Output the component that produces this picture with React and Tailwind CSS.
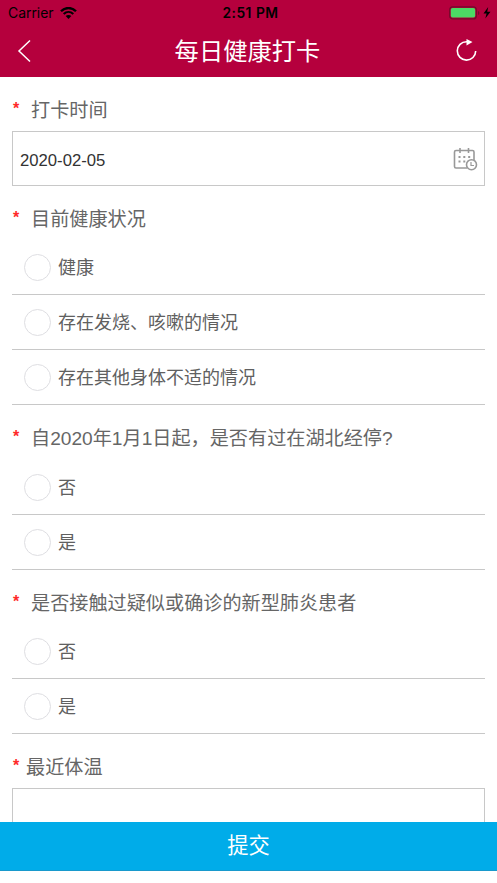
import { useState } from "react";

const questions = [
  {
    title: "目前健康状况",
    options: ["健康", "存在发烧、咳嗽的情况", "存在其他身体不适的情况"],
  },
  {
    title: "自2020年1月1日起，是否有过在湖北经停?",
    options: ["否", "是"],
    extra: "pb-px",
  },
  {
    title: "是否接触过疑似或确诊的新型肺炎患者",
    options: ["否", "是"],
  },
];

const StatusBar = () => (
  <div className="grid h-[26px] grid-cols-3 items-center pl-2 pr-1.5 text-[14px] text-black font-[Inter,sans-serif]">
    <div className="flex items-center gap-[6px] pb-px">
      <span className="tracking-[-0.05px]">Carrier</span>
      <svg width="17" height="12" viewBox="0 0 17 12" fill="none" stroke="black">
        <path d="M1 4.3C5.2-.1 11.8-.1 16 4.3" strokeWidth="2.3" />
        <path d="M3.7 7.1C6.5 4.3 10.5 4.3 13.3 7.1" strokeWidth="2.1" />
        <path d="M8.5 12L5.7 9.1C7.3 7.5 9.7 7.5 11.3 9.1Z" fill="black" stroke="none" />
      </svg>
    </div>
    <div className="whitespace-nowrap pl-[2px] text-center font-semibold tracking-[0.5px] text-[13.8px]">2:51 PM</div>
    <div className="flex items-center justify-end pb-px">
      <svg width="42" height="14" viewBox="0 0 42 14">
        <rect x="0.7" y="0.9" width="26.6" height="12" rx="3" fill="none" stroke="#730a2b" strokeWidth="1.2" />
        <rect x="1.8" y="2" width="24.4" height="9.6" rx="1.8" fill="#4cd964" />
        <path d="M29 5v4q1.4-.6 1.4-2T29 5Z" fill="#730a2b" />
        <path d="M39.2 1L34.5 7.6H37.6L36.3 12.6L41.5 5.8H38.2Z" fill="black" />
      </svg>
    </div>
  </div>
);

const Label = ({ children, gap = "gap-[11px]" }) => (
  <div className={`flex h-[54px] items-center pl-px pt-3.5 text-[19.15px] leading-[30px] text-[#666] ${gap}`}>
    <span className="w-[7px] pb-1 text-[16px] font-bold font-[Liberation_Sans,sans-serif] text-[#ff2a2a]">*</span>
    <span className="whitespace-nowrap">{children}</span>
  </div>
);

const Question = ({ title, options, extra = "" }) => {
  const [selected, setSelected] = useState(null);

  return (
    <div>
      <div className={extra}>
        <Label>{title}</Label>
      </div>
      {options.map((option, index) => (
        <button
          key={index}
          className="flex h-[55px] w-full items-center gap-[7px] border-b border-[#c8c8c8] pl-3 text-left text-[18px] text-[#606060]"
          onClick={() => setSelected(index)}
        >
          <span
            className={`size-[27px] shrink-0 rounded-full border border-[#dedee2] ${
              selected === index ? "bg-[#00ace9]" : "bg-white"
            }`}
          />
          <span className="pt-0.5">{option}</span>
        </button>
      ))}
    </div>
  );
};

const App = () => {
  return (
    <div className="flex h-[883px] w-[497px] flex-col overflow-hidden bg-white font-[Liberation_Sans,Noto_Sans_CJK_SC,sans-serif]">
      <header className="h-[77px] shrink-0 bg-[#b5003d]">
        <StatusBar />
        <div className="flex h-[50px] items-center justify-between pl-[17px] pr-[19px] text-white">
          <svg width="22" height="24" viewBox="0 0 22 24" fill="none" stroke="white" strokeWidth="1.5">
            <path d="M13 1.5L2 12L13 22.5" />
          </svg>
          <h1 className="pt-px text-[24.3px] leading-9">每日健康打卡</h1>
          <svg width="22" height="24" viewBox="0 0 22 24" fill="none" stroke="white" strokeWidth="1.6">
            <path d="M12.5 2.7H10.5A9.2 9.2 0 1 0 19.7 12" />
            <path d="M10.5 0L16.5 3L10.5 6.5Z" fill="white" stroke="none" />
          </svg>
        </div>
      </header>

      <main className="min-h-0 flex-1 overflow-hidden px-3">
        <Label>打卡时间</Label>
        <div className="flex h-[55px] items-center justify-between border border-[#c8c8c8] pl-[7px] pr-1.5 text-[16.7px] text-[#333]">
          <span className="pt-1">2020-02-05</span>
          <svg width="25" height="24" viewBox="0 0 25 24" fill="none" stroke="#999" strokeWidth="1.6">
            <path d="M14 21H3Q1.5 21 1.5 19.5V5Q1.5 3.5 3 3.5H19.5Q21 3.5 21 5V13" />
            <path d="M7 1V6M15.5 1V6" />
            <path d="M5.5 10h2M10.3 10h2M15.2 10h2M5.5 14.5h2M10.3 14.5h2" strokeWidth="2" />
            <circle cx="18.5" cy="17.7" r="5" />
            <path d="M18 15V18.5H21" strokeWidth="1.2" />
          </svg>
        </div>

        {questions.map((question) => (
          <Question key={question.title} {...question} />
        ))}

        <Label gap="gap-[6px]">最近体温</Label>
        <div className="h-[55px] border border-[#c8c8c8]" />
      </main>

      <button className="mb-3 h-[49px] shrink-0 border-b border-[#1899cc] bg-[#00ace9] pt-0.5 text-[21.3px] text-white">
        提交
      </button>
    </div>
  );
};

export default App;
